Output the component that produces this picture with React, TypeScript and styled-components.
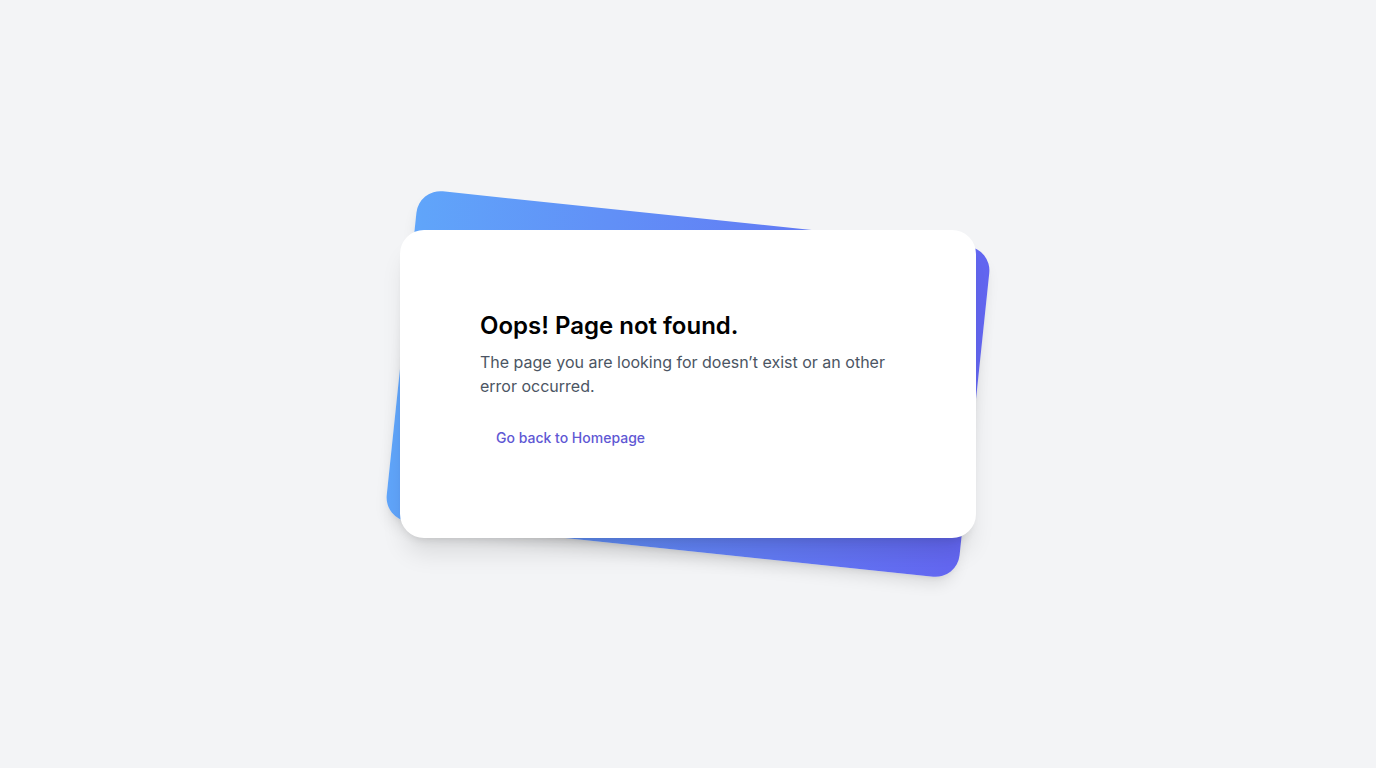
import React from "react";
import styled, { createGlobalStyle } from "styled-components";

const GlobalStyle = createGlobalStyle`
  html, body { margin: 0; padding: 0; }
  body {
    background: #f3f4f6;
    font-family: Inter, "Noto Sans", sans-serif;
    -webkit-font-smoothing: antialiased;
  }
`;

const Page = styled.main`
  min-height: 100vh;
  display: flex;
  align-items: center;
  justify-content: center;
`;

const Stack = styled.div`
  position: relative;
  width: 576px;
`;

const BackCard = styled.div`
  position: absolute;
  inset: -12px 0;
  border-radius: 24px;
  background: linear-gradient(to right, #60a5fa, #6366f1);
  box-shadow: 0 10px 15px -3px rgba(0, 0, 0, 0.1), 0 4px 6px -4px rgba(0, 0, 0, 0.1);
  transform: rotate(6deg);
`;

const Card = styled.div`
  position: relative;
  background: #ffffff;
  border-radius: 24px;
  padding: 80px;
  box-shadow: 0 20px 25px -5px rgba(0, 0, 0, 0.1), 0 8px 10px -6px rgba(0, 0, 0, 0.1);
`;

const Title = styled.h1`
  margin: 0;
  font-size: 24px;
  line-height: 32px;
  font-weight: 600;
  color: #000000;
`;

const Text = styled.p`
  margin: 8px 0 0;
  font-size: 16px;
  line-height: 24px;
  color: #4b5563;
`;

const HomeLink = styled.a`
  display: inline-block;
  margin-top: 20px;
  padding: 10px 16px;
  font-size: 14px;
  line-height: 20px;
  font-weight: 500;
  color: #5f58d4;
  text-decoration: none;
  border-radius: 8px;
`;

export default function App() {
  return (
    <>
      <GlobalStyle />
      <Page>
        <Stack>
          <BackCard />
          <Card>
            <Title>Oops! Page not found.</Title>
            <Text>The page you are looking for doesn’t exist or an other error occurred.</Text>
            <HomeLink href="#">Go back to Homepage</HomeLink>
          </Card>
        </Stack>
      </Page>
    </>
  );
}
